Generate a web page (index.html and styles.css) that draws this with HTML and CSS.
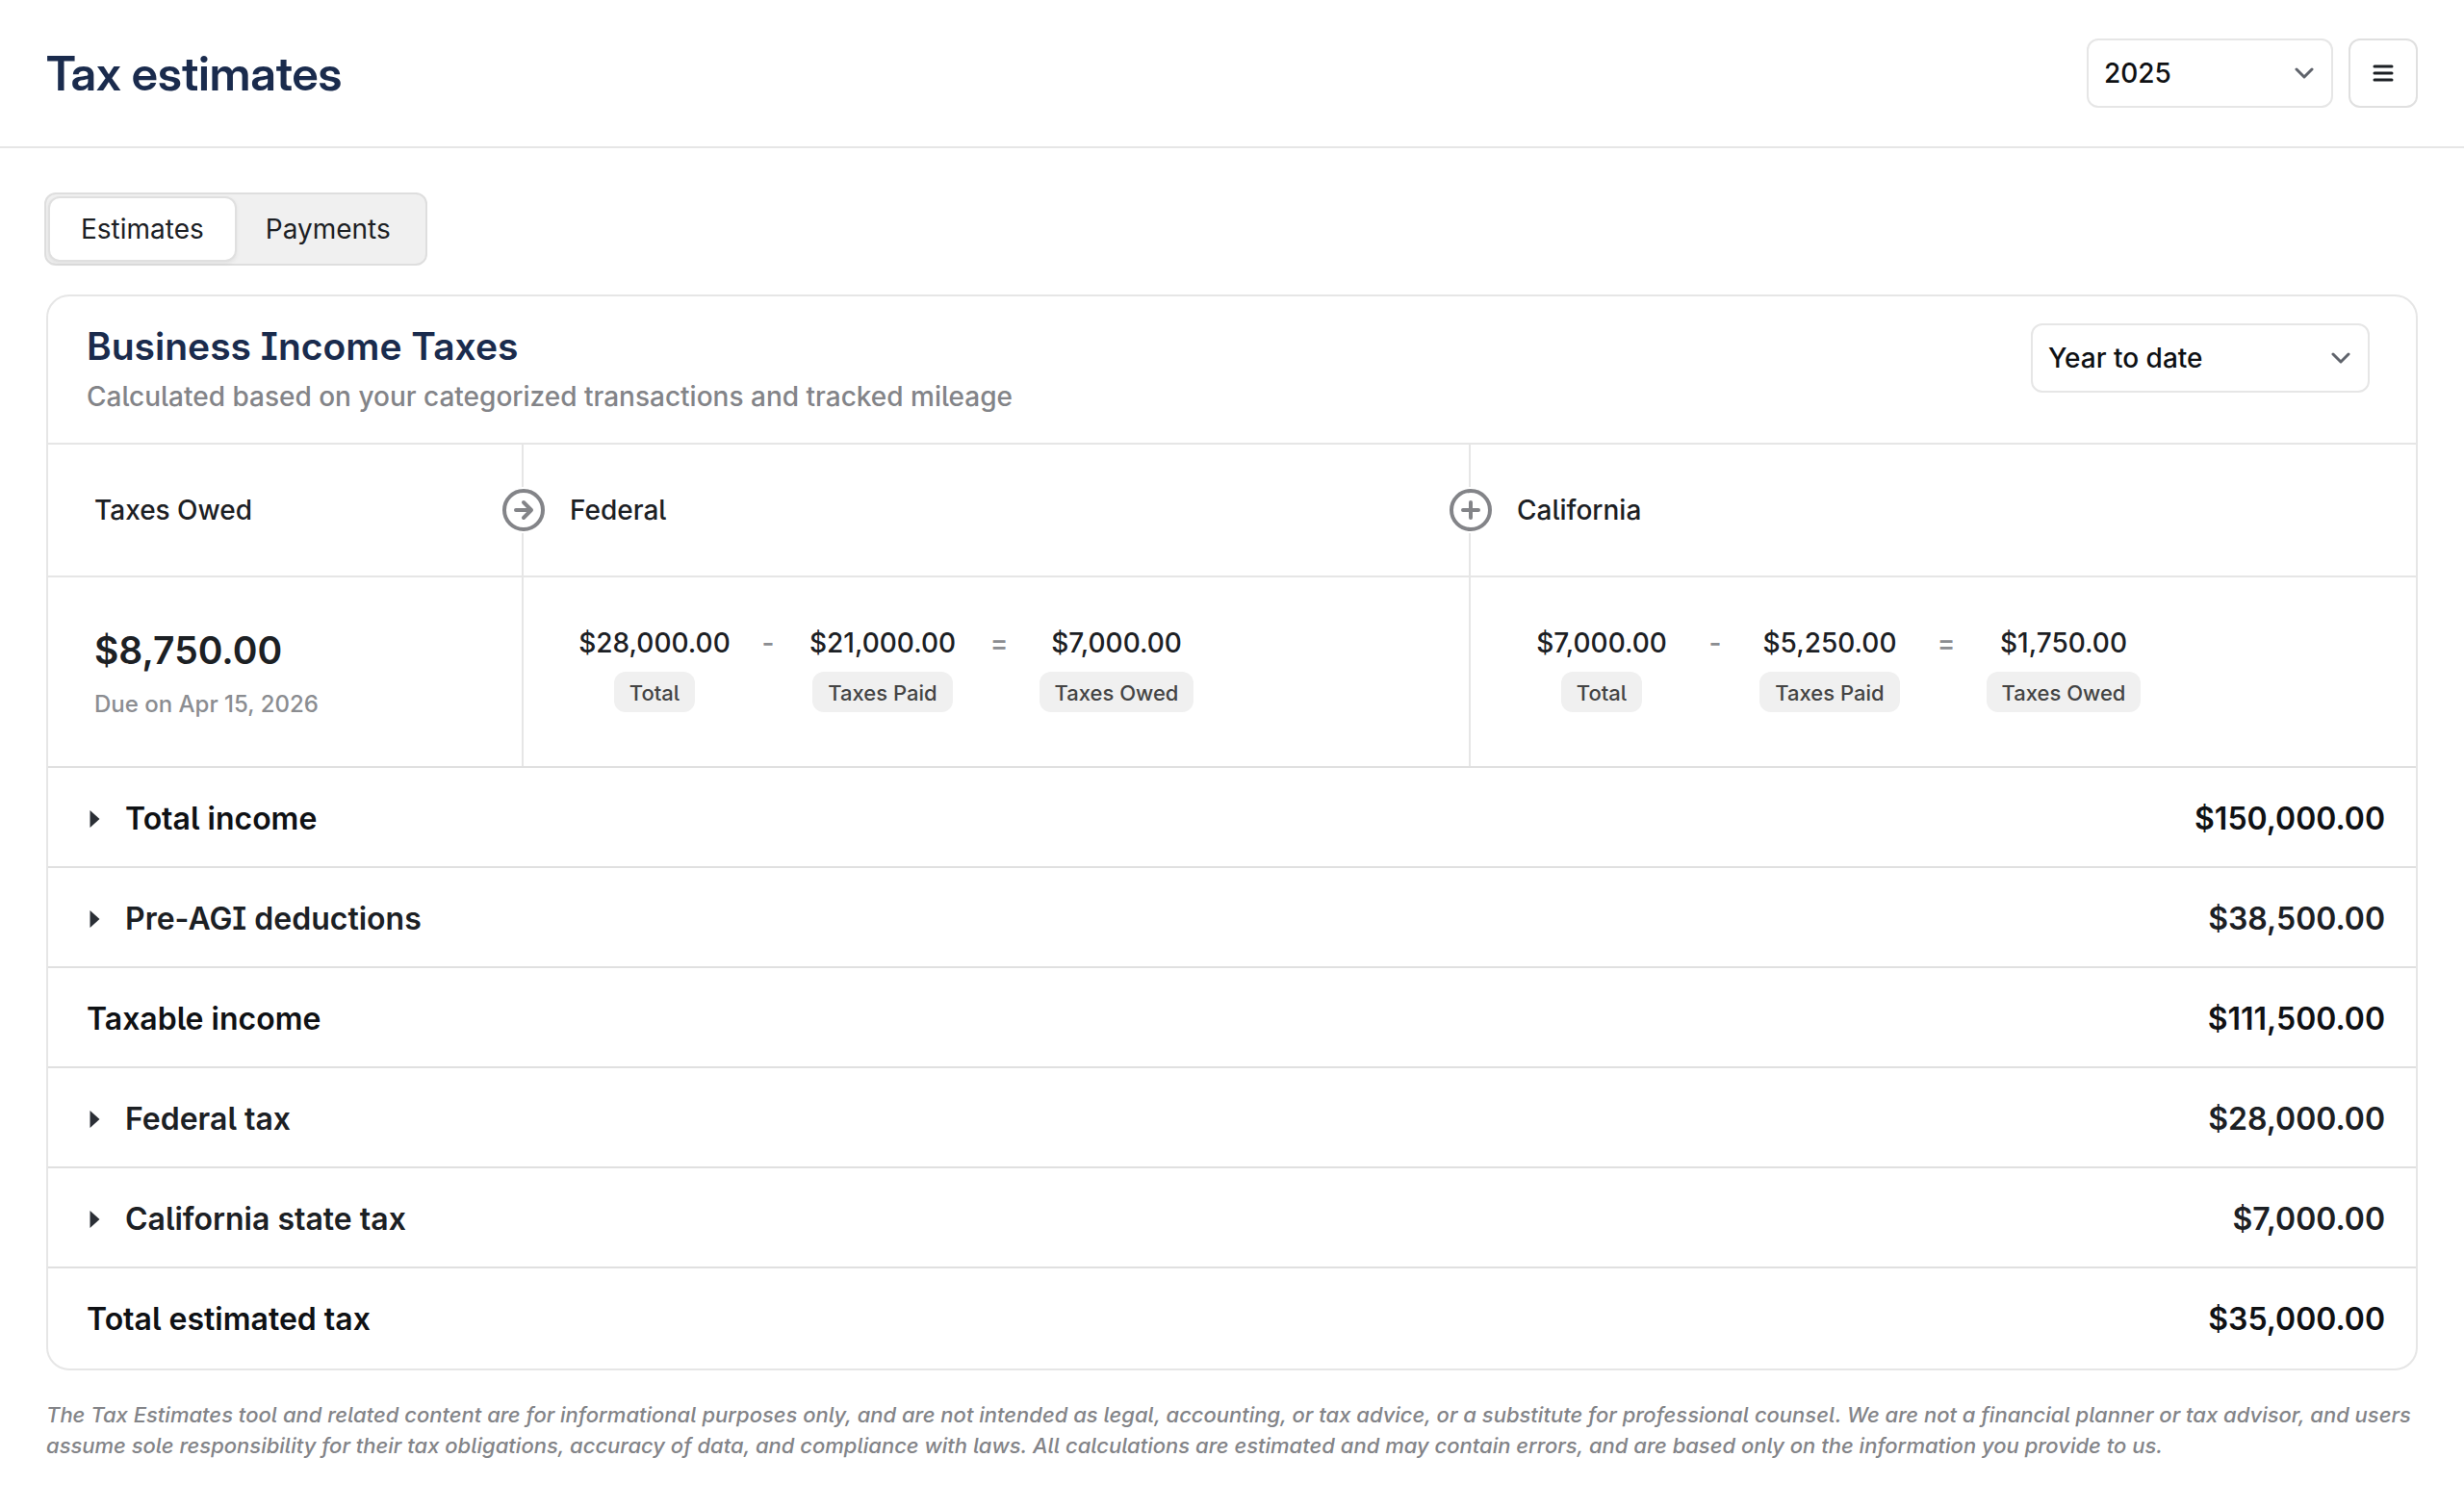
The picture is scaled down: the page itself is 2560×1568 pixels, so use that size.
FILE: index.html
```html
<!DOCTYPE html>
<html lang="en">
<head>
    <meta charset="UTF-8">
    <meta name="viewport" content="width=device-width, initial-scale=1.0">
    <title>Tax estimates</title>
    <link rel="stylesheet" href="styles.css">
</head>
<body>
    <header class="page-header">
        <h1>Tax estimates</h1>
        <div class="header-actions">
            <div class="select-box year-select">
                <select aria-label="Tax year">
                    <option>2025</option>
                </select>
                <svg class="chevron" viewBox="0 0 20 12"><path d="M2 2l8 8 8-8"/></svg>
            </div>
            <button class="menu-btn" type="button" aria-label="Menu">
                <svg viewBox="0 0 24 20"><path d="M3 3h18M3 10h18M3 17h18"/></svg>
            </button>
        </div>
    </header>

    <main>
        <div class="tabs" role="tablist">
            <button class="tab active" type="button" role="tab" aria-selected="true">Estimates</button>
            <button class="tab" type="button" role="tab" aria-selected="false">Payments</button>
        </div>

        <section class="card">
            <div class="card-header">
                <div>
                    <h2>Business Income Taxes</h2>
                    <p>Calculated based on your categorized transactions and tracked mileage</p>
                </div>
                <div class="select-box period-select">
                    <select aria-label="Period">
                        <option>Year to date</option>
                    </select>
                    <svg class="chevron" viewBox="0 0 20 12"><path d="M2 2l8 8 8-8"/></svg>
                </div>
            </div>

            <div class="summary">
                <div class="cell heading">Taxes Owed</div>
                <div class="cell heading">
                    <svg class="op-icon" viewBox="0 0 48 48"><circle cx="24" cy="24" r="20"/><path d="M16 24h16M24 16l8 8-8 8"/></svg>
                    Federal
                </div>
                <div class="cell heading">
                    <svg class="op-icon" viewBox="0 0 48 48"><circle cx="24" cy="24" r="20"/><path d="M24 16v16M16 24h16"/></svg>
                    California
                </div>

                <div class="cell owed">
                    <strong>$8,750.00</strong>
                    <span>Due on Apr 15, 2026</span>
                </div>
                <div class="cell equation">
                    <div class="term">$28,000.00<span class="pill">Total</span></div>
                    <span class="sign">-</span>
                    <div class="term">$21,000.00<span class="pill">Taxes Paid</span></div>
                    <span class="sign">=</span>
                    <div class="term">$7,000.00<span class="pill">Taxes Owed</span></div>
                </div>
                <div class="cell equation">
                    <div class="term">$7,000.00<span class="pill">Total</span></div>
                    <span class="sign">-</span>
                    <div class="term">$5,250.00<span class="pill">Taxes Paid</span></div>
                    <span class="sign">=</span>
                    <div class="term">$1,750.00<span class="pill">Taxes Owed</span></div>
                </div>
            </div>

            <table class="breakdown">
                <tr class="dark">
                    <th scope="row"><button type="button" aria-expanded="false"><svg viewBox="0 0 10 18"><path d="M0 0l10 9-10 9z"/></svg>Total income</button></th>
                    <td>$150,000.00</td>
                </tr>
                <tr>
                    <th scope="row"><button type="button" aria-expanded="false"><svg viewBox="0 0 10 18"><path d="M0 0l10 9-10 9z"/></svg>Pre-AGI deductions</button></th>
                    <td>$38,500.00</td>
                </tr>
                <tr class="dark">
                    <th scope="row">Taxable income</th>
                    <td>$111,500.00</td>
                </tr>
                <tr>
                    <th scope="row"><button type="button" aria-expanded="false"><svg viewBox="0 0 10 18"><path d="M0 0l10 9-10 9z"/></svg>Federal tax</button></th>
                    <td>$28,000.00</td>
                </tr>
                <tr>
                    <th scope="row"><button type="button" aria-expanded="false"><svg viewBox="0 0 10 18"><path d="M0 0l10 9-10 9z"/></svg>California state tax</button></th>
                    <td>$7,000.00</td>
                </tr>
                <tr class="dark">
                    <th scope="row">Total estimated tax</th>
                    <td>$35,000.00</td>
                </tr>
            </table>
        </section>

        <p class="disclaimer">The Tax Estimates tool and related content are for informational purposes only, and are not intended as legal, accounting, or tax advice, or a substitute for professional counsel. We are not a financial planner or tax advisor, and users assume sole responsibility for their tax obligations, accuracy of data, and compliance with laws. All calculations are estimated and may contain errors, and are based only on the information you provide to us.</p>
    </main>
</body>
</html>
```
FILE: styles.css
```css
* {
    box-sizing: border-box;
}

body {
    margin: 0;
    background-color: #fff;
    color: #1c2024;
    font-family: Inter, "Liberation Sans", sans-serif;
    font-size: 28px;
    font-weight: 500;
    line-height: 40px;
    /* l with tail, I with serifs */
    font-feature-settings: "cv05", "cv08";
}

h1, h2, p {
    margin: 0;
}

button, select {
    font: inherit;
    font-feature-settings: inherit;
    color: inherit;
    background: none;
    border: none;
    padding: 0;
    cursor: pointer;
}

.page-header {
    display: flex;
    justify-content: space-between;
    align-items: center;
    padding: 40px 48px;
    border-bottom: 2px solid #e6e6e6;
}

h1 {
    padding-top: 2px;
    font-family: "Inter Display", Inter, sans-serif;
    font-size: 49px;
    font-weight: 600;
    color: #1a2b4d;
}

.header-actions {
    display: flex;
    gap: 16px;
}

.select-box {
    position: relative;
    height: 72px;
}

.select-box select {
    appearance: none;
    width: 100%;
    height: 100%;
    padding: 0 48px 0 16px;
    border: 2px solid #e6e6e6;
    border-radius: 12px;
    background-color: #fff;
    color: #0f1114;
}

.year-select {
    width: 256px;
}

.period-select {
    width: 352px;
}

.chevron {
    position: absolute;
    top: 30px;
    right: 20px;
    width: 20px;
    height: 12px;
    fill: none;
    stroke: #60646c;
    stroke-width: 3;
    stroke-linecap: round;
    stroke-linejoin: round;
    pointer-events: none;
}

.menu-btn {
    display: flex;
    align-items: center;
    justify-content: center;
    width: 72px;
    height: 72px;
    border: 2px solid #e0e0e0;
    border-radius: 12px;
}

.menu-btn svg {
    width: 24px;
    height: 20px;
    stroke: #1c2024;
    stroke-width: 3;
    stroke-linecap: round;
}

main {
    padding: 46px 48px;
}

.tabs {
    display: inline-flex;
    margin-left: -2px;
    padding: 2px;
    border: 2px solid #dedede;
    border-radius: 12px;
    background-color: #f0f0f0;
}

.tab {
    height: 68px;
    padding: 0 32px 0 28px;
    border: 2px solid transparent;
    border-radius: 12px;
    font-weight: 400;
}

.tab.active {
    padding: 0 32px;
    border-color: #e0e0e0;
    background-color: #fff;
    box-shadow: 0 2px 4px rgba(0, 0, 0, 0.06);
}

.card {
    margin-top: 30px;
    padding-bottom: 2px;
    border: 2px solid #e6e6e6;
    border-radius: 24px;
}

.card-header {
    display: flex;
    justify-content: space-between;
    align-items: flex-start;
    padding: 28px 48px 28px 40px;
}

h2 {
    font-size: 39px;
    font-weight: 600;
    line-height: 48px;
    color: #1a2b4d;
}

.card-header p {
    margin-top: 8px;
    color: #838488;
}

.summary {
    display: grid;
    grid-template-columns: 1fr 2fr 2fr;
}

.cell {
    position: relative;
    padding: 48px;
    border-top: 2px solid #e6e6e6;
    border-left: 2px solid #e6e6e6;
}

.cell:nth-child(3n + 1) {
    border-left: none;
}

.op-icon {
    position: absolute;
    left: -24px;
    top: 44px;
    width: 48px;
    height: 48px;
    background-color: #fff;
    fill: none;
    stroke: #838488;
    stroke-width: 4;
    stroke-linecap: round;
    stroke-linejoin: round;
}

.owed strong {
    display: block;
    font-size: 39px;
    font-weight: 600;
    line-height: 56px;
}

.owed span {
    display: block;
    margin-top: 12px;
    font-size: 24px;
    line-height: 32px;
    color: #8b8d91;
}

.equation {
    display: grid;
    grid-template-columns: 176px 60px 178px 64px 180px;
    text-align: center;
}

.term {
    display: flex;
    flex-direction: column;
    align-items: center;
    gap: 10px;
}

.pill {
    padding: 2px 16px 0;
    border-radius: 12px;
    background-color: #f0f0f0;
    color: #444;
    font-size: 22px;
    line-height: 40px;
}

.sign {
    color: #8b8d91;
}

.breakdown {
    width: 100%;
    border-spacing: 0;
    font-size: 32px;
}

.breakdown th,
.breakdown td {
    height: 104px;
    padding: 4px 0 0;
    border-top: 2px solid #e0e0e0;
    font-weight: 600;
}

.breakdown th {
    padding-left: 40px;
    text-align: left;
}

.breakdown td {
    padding-right: 32px;
    text-align: right;
}

.breakdown .dark {
    color: #0f1114;
}

.breakdown button {
    display: flex;
    align-items: center;
    gap: 26px;
    padding-left: 3px;
}

.breakdown svg {
    width: 11px;
    height: 18px;
    fill: #2b2f36;
}

.disclaimer {
    margin-top: 30px;
    color: #838488;
    font-size: 22px;
    font-style: italic;
    line-height: 32px;
}
```
